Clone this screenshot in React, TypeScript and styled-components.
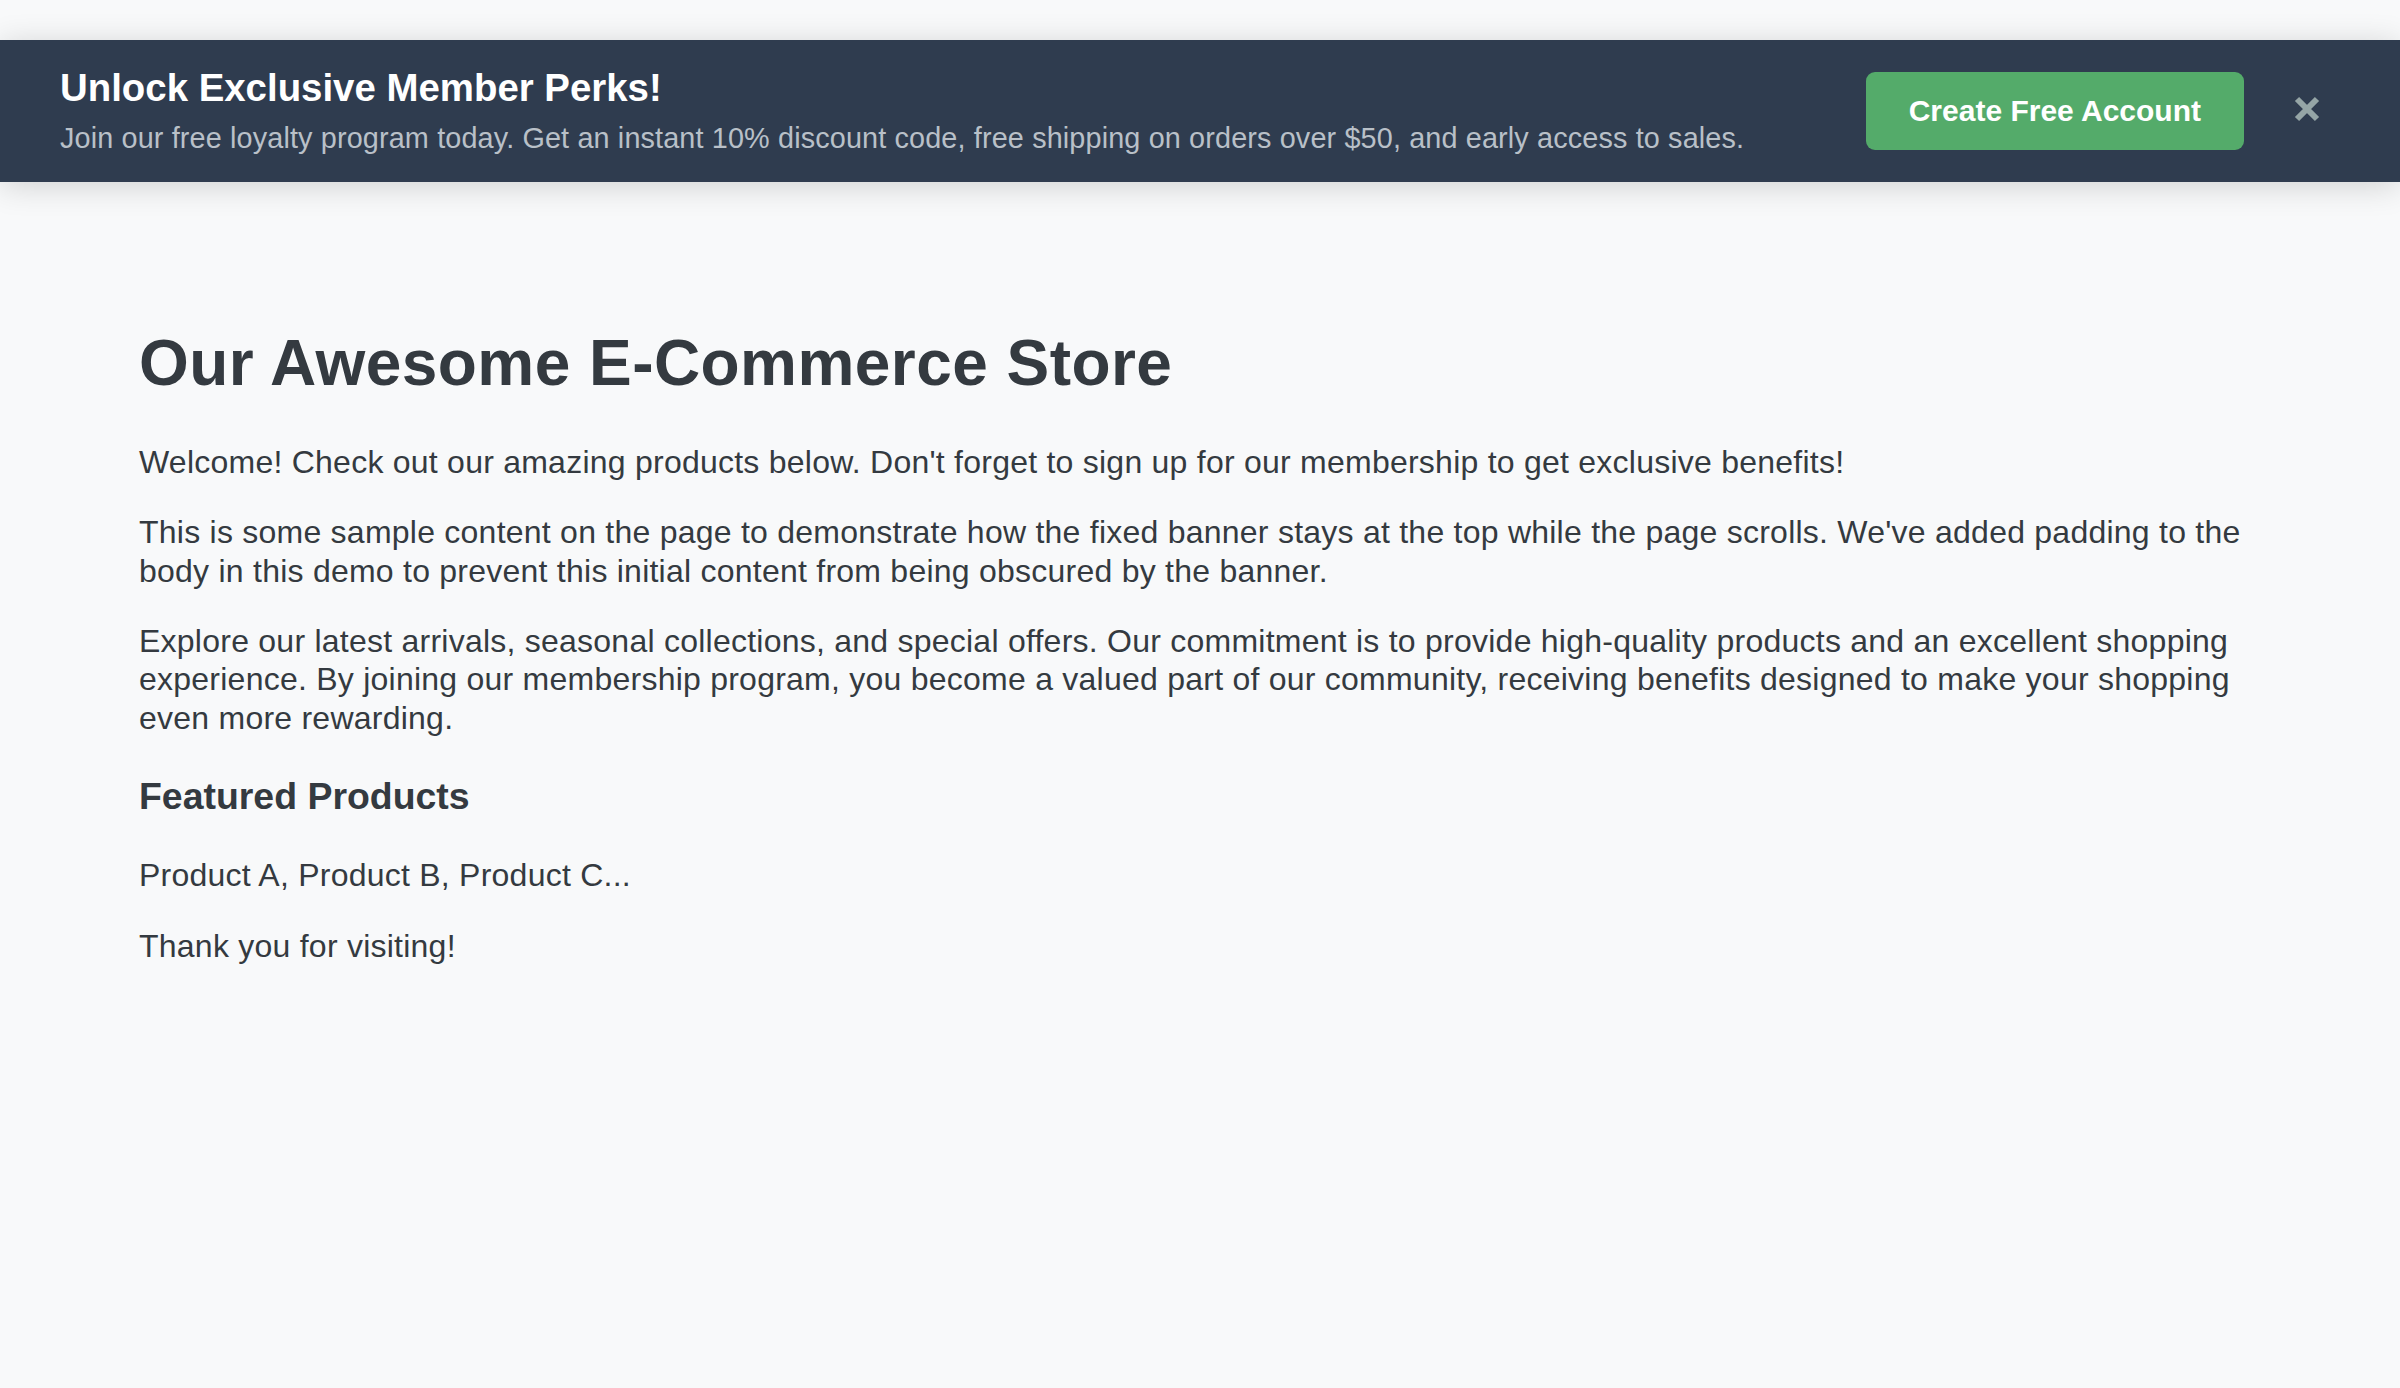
import React from "react";
import styled, { createGlobalStyle } from "styled-components";

const GlobalStyle = createGlobalStyle`
  html, body {
    margin: 0;
    padding: 0;
    background: #f8f9fa;
  }
  body {
    font-family: "Liberation Sans", Arial, Helvetica, sans-serif;
    color: #343a40;
  }
  * { box-sizing: border-box; }
`;

const Page = styled.div`
  min-height: 1388px;
  padding-top: 40px;
  background: #f8f9fa;
`;

const Banner = styled.div`
  display: flex;
  align-items: center;
  justify-content: space-between;
  background: #2f3c4f;
  padding: 26px 80px 27px 60px;
  box-shadow: 0 4px 30px rgba(0, 0, 0, 0.16);
`;

const BannerText = styled.div`
  display: flex;
  flex-direction: column;
`;

const BannerTitle = styled.h2`
  margin: 0 0 12px;
  font-size: 38.4px;
  line-height: 44px;
  font-weight: 700;
  color: #ffffff;
`;

const BannerSubtitle = styled.p`
  margin: 0;
  font-size: 28.8px;
  line-height: 33px;
  letter-spacing: 0.14px;
  color: #b9c0c8;
`;

const Actions = styled.div`
  display: flex;
  align-items: center;
  gap: 50px;
`;

const CtaButton = styled.button`
  font-family: "Liberation Sans", Arial, Helvetica, sans-serif;
  font-size: 30px;
  font-weight: 700;
  line-height: 34px;
  color: #ffffff;
  background: #54ab6a;
  border: none;
  border-radius: 9px;
  padding: 22px 43px;
  cursor: pointer;
`;

const CloseButton = styled.button`
  display: flex;
  align-items: center;
  justify-content: center;
  width: 26px;
  height: 26px;
  padding: 0;
  margin-top: -4px;
  border: none;
  background: transparent;
  color: #95a5a6;
  cursor: pointer;
`;

const Main = styled.main`
  padding: 143px 139px 0;
`;

const Heading = styled.h1`
  margin: 0 0 41px;
  font-size: 64px;
  line-height: 76.8px;
  font-weight: 700;
  letter-spacing: 0.45px;
  color: #343a40;
`;

const Paragraph = styled.p`
  margin: 0 0 32px;
  font-size: 32px;
  line-height: 38.4px;
  letter-spacing: 0.24px;
  color: #343a40;
`;

const SubHeading = styled.h3`
  margin: 37px 0 37px;
  font-size: 37.44px;
  line-height: 45px;
  font-weight: 700;
  color: #343a40;
`;

const CloseIcon = () => (
  <svg width="26" height="26" viewBox="0 0 26 26" aria-hidden="true">
    <path
      d="M3 3 L23 23 M23 3 L3 23"
      stroke="currentColor"
      strokeWidth="6"
      strokeLinecap="butt"
      fill="none"
    />
  </svg>
);

export default function App() {
  return (
    <>
      <GlobalStyle />
      <Page>
        <Banner>
          <BannerText>
            <BannerTitle>Unlock Exclusive Member Perks!</BannerTitle>
            <BannerSubtitle>
              Join our free loyalty program today. Get an instant 10% discount code, free shipping on
              orders over $50, and early access to sales.
            </BannerSubtitle>
          </BannerText>
          <Actions>
            <CtaButton>Create Free Account</CtaButton>
            <CloseButton aria-label="Close">
              <CloseIcon />
            </CloseButton>
          </Actions>
        </Banner>
        <Main>
          <Heading>Our Awesome E-Commerce Store</Heading>
          <Paragraph>
            Welcome! Check out our amazing products below. Don't forget to sign up for our membership
            to get exclusive benefits!
          </Paragraph>
          <Paragraph>
            This is some sample content on the page to demonstrate how the fixed banner stays at the
            top while the page scrolls. We've added padding to the body in this demo to prevent this
            initial content from being obscured by the banner.
          </Paragraph>
          <Paragraph>
            Explore our latest arrivals, seasonal collections, and special offers. Our commitment is
            to provide high-quality products and an excellent shopping experience. By joining our
            membership program, you become a valued part of our community, receiving benefits
            designed to make your shopping even more rewarding.
          </Paragraph>
          <SubHeading>Featured Products</SubHeading>
          <Paragraph>Product A, Product B, Product C...</Paragraph>
          <Paragraph>Thank you for visiting!</Paragraph>
        </Main>
      </Page>
    </>
  );
}
